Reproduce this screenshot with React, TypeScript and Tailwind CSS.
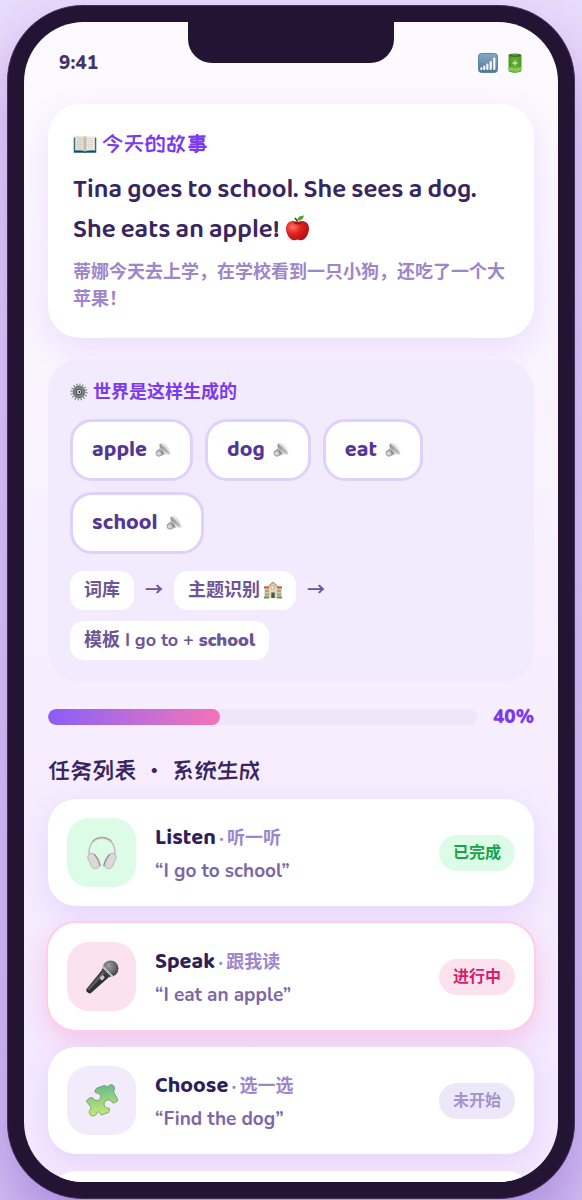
import type { ReactNode } from "react"
import clsx from "clsx"

const display = "font-['Baloo_2','Noto_Sans_CJK_SC',sans-serif]"
const heading = "font-['ZCOOL_KuaiLe','Noto_Sans_CJK_SC',sans-serif]"

function SignalIcon() {
  return (
    <svg width="20" height="20" viewBox="0 0 20 20" aria-hidden="true">
      <defs>
        <linearGradient id="signal" x1="0" y1="0" x2="0" y2="1">
          <stop offset="0" stopColor="#86a9c4" />
          <stop offset="1" stopColor="#4f7898" />
        </linearGradient>
      </defs>
      <rect x="0.5" y="0.5" width="19" height="19" rx="3" fill="url(#signal)" stroke="#5c83a1" />
      <path
        d="M3.4 16v-.8M6.3 16v-2.500M9.400 16V11.500M12.700 16V9M16.300 16V5.500"
        stroke="#fff"
        strokeWidth="2.100"
        strokeLinecap="round"
      />
    </svg>
  )
}

function BatteryIcon() {
  return (
    <svg width="14" height="20" viewBox="0 0 14 20" aria-hidden="true">
      <path d="M0.500 2.500v15c0 1.400 2.800 2.200 6.500 2.200s6.500-.8 6.500-2.200v-15z" fill="#4f9d22" />
      <path d="M3 4v14.500c2 .7 6 .7 8 0V4z" fill="#5eaa2c" />
      <path d="M.8 14c2 1 10 1 12.400 0v3.500c-2 1.600-10.400 1.600-12.400 0z" fill="#85c95c" />
      <ellipse cx="7" cy="2.200" rx="6.500" ry="1.700" fill="#3c7a1d" />
      <ellipse cx="7" cy="1.700" rx="3" ry=".7" fill="#6b9a58" />
      <path d="M7 7.500v5M4.500 10h5" stroke="#c3e8ae" strokeWidth="1.300" />
    </svg>
  )
}

function BookIcon() {
  return (
    <svg width="24" height="20" viewBox="0 0 24 20" aria-hidden="true">
      <path d="M.7 3.500h22.600v15.300H.7z" fill="#2f7187" />
      <path d="M1.300 17.500h9.500l1.200.8 1.200-.8h9.500" stroke="#174b60" strokeWidth="1.300" fill="none" />
      <path d="M2.200 2c3.500-.5 7-.4 9.800.7v14.600c-3-1.200-6.300-1.300-9.800-.7z" fill="#e6e1d9" />
      <path d="M21.800 2c-3.500-.5-7-.4-9.800.7v14.600c3-1.200 6.300-1.300 9.800-.7z" fill="#f2eee7" />
      <path d="M10.500 2.200 12 2.700l1.500-.5V17l-1.500.4-1.500-.4z" fill="#c3bcb1" />
      <path
        d="M4 4.500h5.500M4 6.500h5.500M4 8.500h5.500M4 10.500h5.500M4 12.500h5.500M4 14.500h5.500M14.500 4.500H20M14.500 6.500H20M14.500 8.500H20M14.500 10.500H20M14.500 12.500H20M14.500 14.500H20"
        stroke="#c9c4ba"
        strokeWidth=".7"
      />
    </svg>
  )
}

function AppleIcon() {
  return (
    <svg width="25" height="26" viewBox="0 0 25 26" className="inline-block align-[-4px]" aria-hidden="true">
      <defs>
        <radialGradient id="apple" cx=".3" cy=".32" r=".75">
          <stop offset="0" stopColor="#fb7565" />
          <stop offset=".45" stopColor="#e3231f" />
          <stop offset="1" stopColor="#ae1014" />
        </radialGradient>
      </defs>
      <path
        d="M12.500 7.200C9.500 5.400 5.800 5.500 3.300 7.700.6 10.200.4 14.500 2 18.600c1.500 4 4.300 7 7.200 6.700 1.300-.1 2-.6 3.300-.6s2 .5 3.300.6c2.900.3 5.700-2.700 7.200-6.700 1.600-4.100 1.400-8.400-1.300-10.900-2.500-2.200-6.200-2.300-9.200-.5z"
        fill="url(#apple)"
      />
      <path d="M9.500 7.600c1.800 1.300 4.200 1.300 6 0" stroke="#8d1512" strokeWidth="1.300" fill="none" strokeLinecap="round" />
      <path d="M12.600 8.200c-.2-2.200-1-3.700-2.300-4.800" stroke="#5d3b1c" strokeWidth="1.500" fill="none" strokeLinecap="round" />
      <path d="M12.300 5.500c.2-3 2.400-5 6.500-5.100-.1 3.300-2.700 5.400-6.500 5.100z" fill="#4ea32f" />
    </svg>
  )
}

function GearIcon() {
  return (
    <svg width="18" height="18" viewBox="0 0 18 18" aria-hidden="true">
      <circle cx="9" cy="9" r="7.500" fill="none" stroke="#8b8e91" strokeWidth="2.200" strokeDasharray="1.300 1.650" />
      <circle cx="9" cy="9" r="5.200" fill="#b0b3b5" stroke="#777b7e" strokeWidth="2.400" />
      <circle cx="9" cy="9" r="2.900" fill="#d8dadb" stroke="#4b4e51" strokeWidth="1.300" />
      <circle cx="9.300" cy="9" r="1" fill="#303336" />
    </svg>
  )
}

function SpeakerIcon() {
  return (
    <svg width="16" height="16" viewBox="0 0 17 17" aria-hidden="true">
      <defs>
        <linearGradient id="speaker" x1="0" y1="0" x2="1" y2="1">
          <stop offset="0" stopColor="#909395" />
          <stop offset="1" stopColor="#c3c6c7" />
        </linearGradient>
      </defs>
      <path d="M6 1C9.500-.2 15.500 5 16.500 13.200c-1.500 1.700-4.700.8-7.500-2C5.400 8 4 3.300 6 1z" fill="#dfe5e5" />
      <path d="M5.600 1.500c1 1.500 7.500 5 10.600 11-4.500 0-8.400-3.300-10.900-6.400-1-1.800-.9-3.600.3-4.600z" fill="url(#speaker)" />
      <path d="M5.500 6.500 1.300 9.600c-1.500 1.900.8 5.800 3.600 5.900l6-2.500z" fill="#a9adae" />
      <circle cx="4" cy="12.200" r="2.800" fill="#d3d5d6" stroke="#929597" strokeWidth=".9" />
      <path d="m6.500 9.500 2.300 3" stroke="#7d8082" strokeWidth="1.200" />
    </svg>
  )
}

function SchoolIcon() {
  return (
    <svg width="18" height="17" viewBox="0 0 18 17" aria-hidden="true">
      <path d="M.5 6h17v10H.5z" fill="#d7c6a0" />
      <path d="M0 4.300h6v2.200H0zM12 4.300h6v2.200h-6z" fill="#c8674d" />
      <path d="M5 4 9 .5 13 4v12H5z" fill="#e6d8b4" />
      <path d="m4.500 4.300 4.500-4 4.500 4" stroke="#b98a5e" strokeWidth="1.100" fill="none" />
      <circle cx="9" cy="5.500" r="1.900" fill="#fff" stroke="#a08b66" strokeWidth=".6" />
      <path d="M9 4.500v1h.8" stroke="#555" strokeWidth=".5" fill="none" />
      <path d="M1.500 8h1v2h-1zM3.500 8h1v2h-1zM13.500 8h1v2h-1zM15.500 8h1v2h-1zM1.500 11.500h1v2h-1zM3.500 11.500h1v2h-1zM13.500 11.500h1v2h-1zM15.500 11.500h1v2h-1z" fill="#68838a" />
      <path d="M7.300 10.500h3.400V16H7.300z" fill="#46565c" />
      <path d="M0 14.500h5v2H0zM13 14.500h5v2h-5z" fill="#6c914c" />
    </svg>
  )
}

function HeadphonesIcon() {
  return (
    <svg width="30" height="34" viewBox="0 0 30 34" aria-hidden="true">
      <path d="M2.300 20C1 9 6 2 15 2s14 7 12.700 18" stroke="#c2b9bb" strokeWidth="1.500" fill="none" />
      <path d="M5.500 5.900C10.500.3 19.500.3 24.500 5.900" stroke="#aaa0a4" strokeWidth="2" fill="none" />
      <path d="M5.500 6.500C10.500 1.500 19.500 1.500 24.500 6.500" stroke="#ded7d9" strokeWidth="1" fill="none" />
      <rect x="2.500" y="17" width="8" height="16" rx="4" transform="rotate(-25 6.500 25)" fill="#ddd8d9" stroke="#c4bbbe" />
      <rect x="19.500" y="17" width="8" height="16" rx="4" transform="rotate(25 23.500 25)" fill="#ddd8d9" stroke="#c4bbbe" />
      <path d="M7.300 18.500c3.300 3 5 7 5.700 11.200M22.700 18.500c-3.300 3-5 7-5.700 11.200" stroke="#a3969b" strokeWidth="1.600" fill="none" strokeLinecap="round" />
    </svg>
  )
}

function MicIcon() {
  return (
    <svg width="34" height="34" viewBox="0 0 34 34" aria-hidden="true">
      <defs>
        <radialGradient id="mic-head" cx=".4" cy=".35" r=".7">
          <stop offset="0" stopColor="#a6a7aa" />
          <stop offset="1" stopColor="#3a3b3e" />
        </radialGradient>
      </defs>
      <path d="m17 10 7 7L6 33c-2.300 1.500-6-1.700-4.300-4.300z" fill="#2f3033" />
      <path d="m17.700 11.200 2.200 2.200L4 30.500 2.500 29z" fill="#5b5c60" />
      <circle cx="25.500" cy="8.500" r="8" fill="url(#mic-head)" />
      <path d="m17.500 6.500 10 10" stroke="#c4c5c8" strokeWidth="2" />
      <path d="m17 9 8 8" stroke="#333437" strokeWidth="1.300" />
      <path d="m20 4 9.500 9.500M23 2l9 9M20 12l9.500-9.500M24 14.500l8-8" stroke="#707175" strokeWidth=".6" />
      <rect x="15.500" y="15.500" width="3.600" height="4.500" rx="1" transform="rotate(45 17.300 17.700)" fill="#c5c6c9" />
    </svg>
  )
}

function PuzzleIcon() {
  return (
    <svg width="34" height="34" viewBox="0 0 34 34" aria-hidden="true">
      <defs>
        <linearGradient id="puzzle" x1=".2" y1="0" x2=".3" y2="1">
          <stop offset="0" stopColor="#63bb8a" />
          <stop offset="1" stopColor="#c6e976" />
        </linearGradient>
      </defs>
      <path
        d="m12.500 3.800 6.800-2.300c1.800-.2 2.200 1.700 3.700 1.200C24.200-.3 29.200-.1 29.500 4c.2 2-1.200 3-.6 4.400l4 7.500c.2 1.300-3.500 3.400-5 3-1.700-.6-1.700-3-4.500-3-4.300.3-5.600 4.800-2.900 7.300 1.500 1.300 3.600.2 4.300 1.900l-1.300 3.400-6.900 2.400c-1.800-.5-1.500-2.600-3-3.100-1.700-.3-1.600 2.100-3.200 3.500-3.300 1.800-6.700-.6-6-4 .5-1.900 1.900-2.500 1.500-4.300L1.400 17.300c.4-1.700 3.200-3.800 5.200-3.800 2 0 2 3 5.100 3 3.300-.1 5-3.700 3-6.200-1.500-1.700-4.400-.7-4.700-2.500-.2-1.600 1-3.500 2.500-4z"
        fill="url(#puzzle)"
        stroke="#628b58"
        strokeWidth=".7"
      />
    </svg>
  )
}

const words = ["apple", "dog", "eat", "school"]

type Status = "done" | "active" | "todo"

interface Task {
  title: string
  label: string
  phrase: string
  status: Status
  icon: ReactNode
}

const tasks: Task[] = [
  { title: "Listen", label: "听一听", phrase: "I go to school", status: "done", icon: <HeadphonesIcon /> },
  { title: "Speak", label: "跟我读", phrase: "I eat an apple", status: "active", icon: <MicIcon /> },
  { title: "Choose", label: "选一选", phrase: "Find the dog", status: "todo", icon: <PuzzleIcon /> },
]

const statusText: Record<Status, string> = { done: "已完成", active: "进行中", todo: "未开始" }

const tileColor: Record<Status, string> = {
  done: "bg-[#dcfce7]",
  active: "bg-[#fce1ef]",
  todo: "bg-[#f1ebfb]",
}

const badgeColor: Record<Status, string> = {
  done: "bg-[#dcfce7] text-[#16a34a]",
  active: "bg-[#fce1ef] text-[#d61f69]",
  todo: "bg-[#ede7fa] text-[#a593cb]",
}

function TaskCard({ task }: { task: Task }) {
  return (
    <article
      className={clsx(
        "flex shrink-0 items-center gap-[19px] rounded-[28px] bg-white p-[19px]",
        task.status === "active"
          ? "shadow-[0_0_0_2px_#fbcfe5,0_10px_26px_rgba(244,114,182,0.32)]"
          : "shadow-[0_8px_26px_rgba(139,92,246,0.14)]",
      )}
    >
      <div className={clsx("flex size-[69px] shrink-0 items-center justify-center rounded-[22px]", tileColor[task.status])}>
        {task.icon}
      </div>
      <div className="min-w-0 flex-1 pt-1">
        <h3 className={clsx("text-[18px] leading-8 font-bold text-[#9d86cb]", display)}>
          <span className="text-[22px] text-[#2e1f5b]">{task.title}</span> · {task.label}
        </h3>
        <p className="text-[19px] leading-8 font-bold text-[#7b68a8]">“{task.phrase}”</p>
      </div>
      <span className={clsx("rounded-full px-[14px] py-1 text-[16px] leading-7 font-bold", badgeColor[task.status])}>
        {statusText[task.status]}
      </span>
    </article>
  )
}

function FlowPill({ children }: { children: ReactNode }) {
  return (
    <span className="flex h-[39px] items-center gap-1 rounded-[14px] bg-white px-[14px]">{children}</span>
  )
}

export default function App() {
  return (
    <div
      lang="zh-CN"
      className="flex h-screen flex-col bg-linear-to-b from-[#eadcfc] to-[#d5c2f3] px-[7px] pt-[5px] pb-px font-[Nunito,'Noto_Sans_CJK_SC',sans-serif]"
    >
      <div className="flex min-h-0 flex-1 flex-col rounded-[76px] border border-[#44305a] bg-[#231433] p-4 shadow-[0_30px_60px_rgba(91,33,182,0.35)]">
        <main className="relative flex min-h-0 flex-1 flex-col overflow-hidden rounded-[60px] bg-linear-to-b from-[#fdfaff] via-[#f7effe] to-[#f4e7fe] px-6">
          <div className="absolute top-0 left-1/2 h-[41px] w-[206px] -translate-x-1/2 rounded-b-[24px] bg-[#231433]" />

          <header className="flex h-[82px] shrink-0 items-center justify-between pr-3 pl-[11px] text-[19px] font-extrabold text-[#43336b]">
            <span>9:41</span>
            <span className="flex items-center gap-[10px]">
              <SignalIcon />
              <BatteryIcon />
            </span>
          </header>

          <section className="shrink-0 rounded-[32px] bg-white p-[25px] shadow-[0_10px_32px_rgba(139,92,246,0.14)]">
            <h1 className={clsx("flex items-center gap-[5px] text-[23px] leading-[30px] text-[#7c3aed]", heading)}>
              <BookIcon />
              今天的故事
            </h1>
            <p className={clsx("mt-[11px] text-[26px] leading-10 font-semibold text-[#382660]", display)}>
              Tina goes to school. She sees a dog. She eats an apple! <AppleIcon />
            </p>
            <p className="mt-[9px] text-[18px] leading-[27px] font-semibold text-[#9d86c9]">
              蒂娜今天去上学，在学校看到一只小狗，还吃了一个大苹果！
            </p>
          </section>

          <section className="mt-[21px] shrink-0 rounded-[32px] bg-[#f2eafd] p-[22px]">
            <h2 className="flex items-center gap-[5px] text-[18px] leading-[22px] font-bold text-[#7c3aed]">
              <GearIcon />
              世界是这样生成的
            </h2>
            <div className="mt-4 flex flex-wrap gap-x-3 gap-y-[11px]">
              {words.map((w) => (
                <button
                  key={w}
                  className={clsx(
                    "flex h-[62px] cursor-pointer items-center gap-2 rounded-[22px] border-[3px] border-[#dfd2fa] bg-white px-[19px] text-[22px] font-bold text-[#553697]",
                    display,
                  )}
                >
                  {w}
                  <SpeakerIcon />
                </button>
              ))}
            </div>
            <div className="mt-[17px] flex flex-wrap items-center gap-[11px] text-[18px] font-bold text-[#6d5597]">
              <FlowPill>词库</FlowPill>
              <span>→</span>
              <FlowPill>
                主题识别 <SchoolIcon />
              </FlowPill>
              <span>→</span>
              <FlowPill>
                <span>
                  模板 I go to + <b className="font-black">school</b>
                </span>
              </FlowPill>
            </div>
          </section>

          <div className="mt-[22px] flex shrink-0 items-center gap-4">
            <div
              role="progressbar"
              aria-label="任务列表"
              aria-valuenow={40}
              className="h-4 flex-1 overflow-hidden rounded-full bg-[#efe6fc]"
            >
              <div className="h-full rounded-full bg-linear-to-r from-[#8b5cf6] to-[#f472b6]" style={{ width: "40%" }} />
            </div>
            <span className="text-[19px] leading-[26px] font-black text-[#7c3aed]">40%</span>
          </div>

          <h2 className={clsx("mt-6 shrink-0 text-[24px] leading-8 text-[#382660]", heading)}>任务列表 · 系统生成</h2>

          <div className="mt-[13px] flex flex-col gap-[17px]">
            {tasks.map((t) => (
              <TaskCard key={t.title} task={t} />
            ))}
            <article className="h-[107px] shrink-0 rounded-[28px] bg-white" />
          </div>
        </main>
      </div>
    </div>
  )
}
